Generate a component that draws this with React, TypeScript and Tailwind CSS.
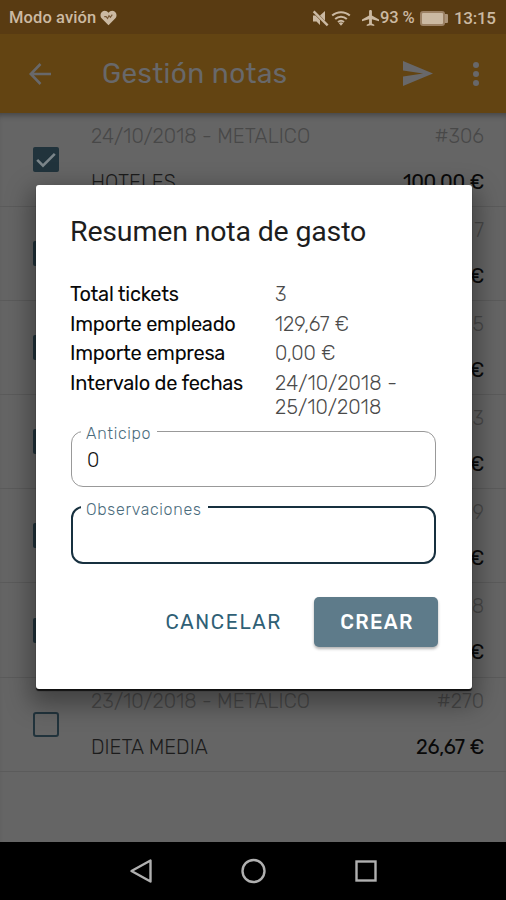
import React from "react";

type Ticket = { id: string; date: string; name: string; amount: string; checked: boolean };

const tickets: Ticket[] = [
  { id: "#306", date: "24/10/2018 - METALICO", name: "HOTELES", amount: "100,00 €", checked: true },
  { id: "7", date: "", name: "", amount: "€", checked: true },
  { id: "5", date: "", name: "", amount: "€", checked: true },
  { id: "3", date: "", name: "", amount: "€", checked: true },
  { id: "9", date: "", name: "", amount: "€", checked: true },
  { id: "8", date: "", name: "", amount: "€", checked: true },
  { id: "#270", date: "23/10/2018 - METALICO", name: "DIETA MEDIA", amount: "26,67 €", checked: false },
];

function StatusBar() {
  return (
    <header className="flex h-[34px] shrink-0 items-center bg-[#593b12] pl-[9px] pr-[11px] pt-[2px] font-[Roboto,sans-serif] text-[#cbb9a2]">
      <span className="w-[90px] whitespace-nowrap text-[16.500px] font-medium leading-none tracking-[0.100px]">Modo avión</span>
      <svg className="ml-[1px] h-[16px] w-[17px]" viewBox="0 0 18 17">
        <path fill="currentColor" d="M9 16.2 2.2 9.4C-.3 6.9.2 3.400 2.200 1.900 4.400.2 7.400.7 9 3c1.600-2.300 4.600-2.800 6.800-1.100 2 1.500 2.500 5 0 7.500Z" />
        <path fill="none" stroke="#765735" strokeWidth="1.200" d="M4.500 7h2l1.500 2 1.500-3 1.500 1.700L13 5" />
      </svg>
      <div className="ml-auto flex items-center">
        <svg className="h-[17px] w-[17px]" viewBox="0 0 17 17" fill="currentColor">
          <path d="M1 5.600h2.500L8 10v5L4.500 11.500H1ZM8 5.500 13 1v9.800Z" />
          <path d="m.8 2.200 1.700-1.700 14 14-1.700 1.700Z" />
        </svg>
        <svg className="ml-[2px] h-[16px] w-[20px]" viewBox="0 0 20 16" fill="none" stroke="currentColor" strokeWidth="2">
          <path d="M1.200 5.600a13 13 0 0 1 17.600 0M4.200 9a8.500 8.500 0 0 1 11.600 0M7 12.100a4.500 4.500 0 0 1 6 0" />
          <path fill="currentColor" stroke="none" d="m7.800 13.300 2.200 2.500 2.200-2.500a3.200 3.200 0 0 0-4.400 0Z" />
        </svg>
        <svg className="ml-[11px] h-[16px] w-[17px]" viewBox="3 2 18 20" preserveAspectRatio="none" fill="currentColor">
          <path d="M21 16v-2l-7.500-5V3.500C13.500 2.670 12.830 2 12 2s-1.500.670-1.500 1.500V9L3 14v2l7.500-2.500V19L8 20.500V22l4-1 4 1v-1.500L13.500 19v-5.500L21 16z" />
        </svg>
        <span className="ml-[1px] w-[37px] whitespace-nowrap text-[16.500px] font-medium leading-none tracking-[-0.100px]">93 %</span>
        <span className="ml-[3px] flex h-[15px] w-[25px] items-center rounded-[3px] border-2 border-[#9c8164] bg-[#cbb9a2]" />
        <span className="h-[9px] w-[3px] rounded-r-[1px] bg-[#ab9378]" />
        <span className="ml-[6px] w-[41px] whitespace-nowrap text-[17px] font-medium leading-none tracking-[-0.300px]">13:15</span>
      </div>
    </header>
  );
}

function AppBar() {
  return (
    <nav className="flex h-[79px] shrink-0 items-center bg-[#634412] pl-[28px] pr-[25px] text-[#68686a]">
      <svg className="h-[24px] w-[24px]" viewBox="0 0 24 24" fill="none" stroke="currentColor" strokeWidth="2.600">
        <path d="M23 12H3M12.500 2 2.800 12l9.700 10" />
      </svg>
      <h1 className="ml-[50px] whitespace-nowrap text-[28px] font-normal leading-none tracking-[0.400px]">Gestión notas</h1>
      <svg className="ml-auto h-[25px] w-[30px]" viewBox="0 0 30 25" fill="currentColor">
        <path d="M0 0 30 12.500 0 25V15.500l20-3-20-3Z" />
      </svg>
      <div className="ml-[39px] mr-px flex w-[8px] flex-col items-center gap-[3px]">
        <span className="h-[6px] w-[6px] rounded-full bg-[#68686a]" />
        <span className="h-[6px] w-[6px] rounded-full bg-[#68686a]" />
        <span className="h-[6px] w-[6px] rounded-full bg-[#68686a]" />
      </div>
    </nav>
  );
}

function Checkbox({ checked }: { checked: boolean }) {
  return checked ? (
    <span className="flex h-[25px] w-[26px] items-center justify-center rounded-[2px] bg-[#21333c]">
      <svg className="h-[16px] w-[20px]" viewBox="0 0 20 16" fill="none" stroke="#7b858a" strokeWidth="2.600">
        <path d="m1.200 7.800 5.800 5.800L18.800 1.800" />
      </svg>
    </span>
  ) : (
    <span className="h-[25px] w-[26px] rounded-[3px] border-[2.500px] border-[#21333c]" />
  );
}

function TicketRow({ ticket }: { ticket: Ticket }) {
  return (
    <li className="flex h-[94.100px] items-center border-b border-[#5b5b5b] pl-[33px] pr-[22px]">
      <Checkbox checked={ticket.checked} />
      <div className="ml-[32px] flex h-full flex-1 flex-col pt-[11px]">
        <div className="flex h-[24px] items-center justify-between text-[20px] font-light leading-none text-[#484848]">
          <span className="whitespace-nowrap tracking-[0.100px]">{ticket.date}</span>
          <span className="whitespace-nowrap">{ticket.id}</span>
        </div>
        <div className="mt-[22px] flex h-[24px] items-center justify-between text-[20px] leading-none">
          <span className="whitespace-nowrap font-light text-[#1c1c1c]">{ticket.name}</span>
          <span className="whitespace-nowrap font-normal tracking-[-0.300px] text-[#090909]">{ticket.amount}</span>
        </div>
      </div>
    </li>
  );
}

function SummaryDialog() {
  return (
    <section
      role="dialog"
      className="absolute left-[36px] top-[185px] flex h-[504px] w-[436px] flex-col rounded-[3px] bg-white pl-[34px] pr-[34px] shadow-[0_2px_1px_#111,0_10px_24px_6px_rgba(0,0,0,0.350)]"
    >
      <h2 className="mt-[30px] flex h-[34px] items-center whitespace-nowrap font-[Roboto,sans-serif] text-[28.500px] font-normal leading-none tracking-[-0.170px] text-[#1d1d1d]">
        Resumen nota de gasto
      </h2>
      <dl className="mt-[33px] grid h-[139px] grid-cols-[205px_1fr] content-start gap-y-[5.500px] text-[20px] font-light leading-[24px] text-[#4a4a4a]">
        <dt className="whitespace-nowrap font-normal tracking-[-0.250px] text-[#080808]">Total tickets</dt>
        <dd>3</dd>
        <dt className="whitespace-nowrap font-normal tracking-[-0.250px] text-[#080808]">Importe empleado</dt>
        <dd>129,67 €</dd>
        <dt className="whitespace-nowrap font-normal tracking-[-0.250px] text-[#080808]">Importe empresa</dt>
        <dd>0,00 €</dd>
        <dt className="whitespace-nowrap font-normal tracking-[-0.250px] text-[#080808]">Intervalo de fechas</dt>
        <dd className="whitespace-nowrap tracking-[0.200px]">
          24/10/2018 -<br />
          25/10/2018
        </dd>
      </dl>
      <fieldset className="ml-px h-[66px] w-[365px] rounded-[12px] border border-[#999] pl-[9px]">
        <legend className="h-[20px] w-[76px] whitespace-nowrap pl-[5px] pt-px text-[16px] font-light leading-[24px] tracking-[0.730px] text-[#4a6b7c]">Anticipo</legend>
        <div className="pl-[6px] text-[20px] font-light leading-[38px] text-[#111]">0</div>
      </fieldset>
      <fieldset className="ml-px mt-[10px] h-[67px] w-[365px] rounded-[12px] border-2 border-[#17303f] pl-[8px]">
        <legend className="h-[20px] w-[127px] whitespace-nowrap pl-[5px] pt-px text-[16px] font-light leading-[24px] tracking-[0.730px] text-[#4a6b7c]">Observaciones</legend>
      </fieldset>
      <div className="mt-[33px] flex items-center justify-end">
        <button className="mr-[32px] whitespace-nowrap text-[20px] font-normal leading-none tracking-[1.600px] text-[#2f6075]">CANCELAR</button>
        <button className="h-[50px] w-[124px] rounded-[5px] bg-[#5e7b8a] pb-px pl-[2px] text-[20px] font-medium tracking-[1.300px] text-white shadow-[0_2px_3px_rgba(0,0,0,0.300)]">CREAR</button>
      </div>
    </section>
  );
}

function NavigationBar() {
  return (
    <footer className="flex h-[58px] shrink-0 items-center justify-center gap-[88px] bg-black pl-[2px] text-[#b0b0b0]">
      <svg className="h-[26px] w-[24px]" viewBox="0 0 24 26" fill="none" stroke="currentColor" strokeWidth="2.400">
        <path strokeLinejoin="round" d="M21.500 2.500v21L2.500 13Z" />
      </svg>
      <svg className="h-[26px] w-[26px]" viewBox="0 0 26 26" fill="none" stroke="currentColor" strokeWidth="2.400">
        <circle cx="12.500" cy="13" r="11" />
      </svg>
      <svg className="h-[26px] w-[24px]" viewBox="0 0 24 26" fill="none" stroke="currentColor" strokeWidth="2.400">
        <rect x="1.500" y="3.500" width="19" height="19" />
      </svg>
    </footer>
  );
}

export default function App() {
  return (
    <main className="relative flex h-[900px] w-[506px] flex-col overflow-hidden bg-[#656565] font-[Rubik,Roboto,sans-serif]">
      <StatusBar />
      <AppBar />
      <ul className="flex-1 bg-[#656565] shadow-[inset_0_6px_6px_-4px_rgba(0,0,0,0.350)]">
        {tickets.map((ticket) => (
          <TicketRow key={ticket.id} ticket={ticket} />
        ))}
      </ul>
      <NavigationBar />
      <SummaryDialog />
    </main>
  );
}
